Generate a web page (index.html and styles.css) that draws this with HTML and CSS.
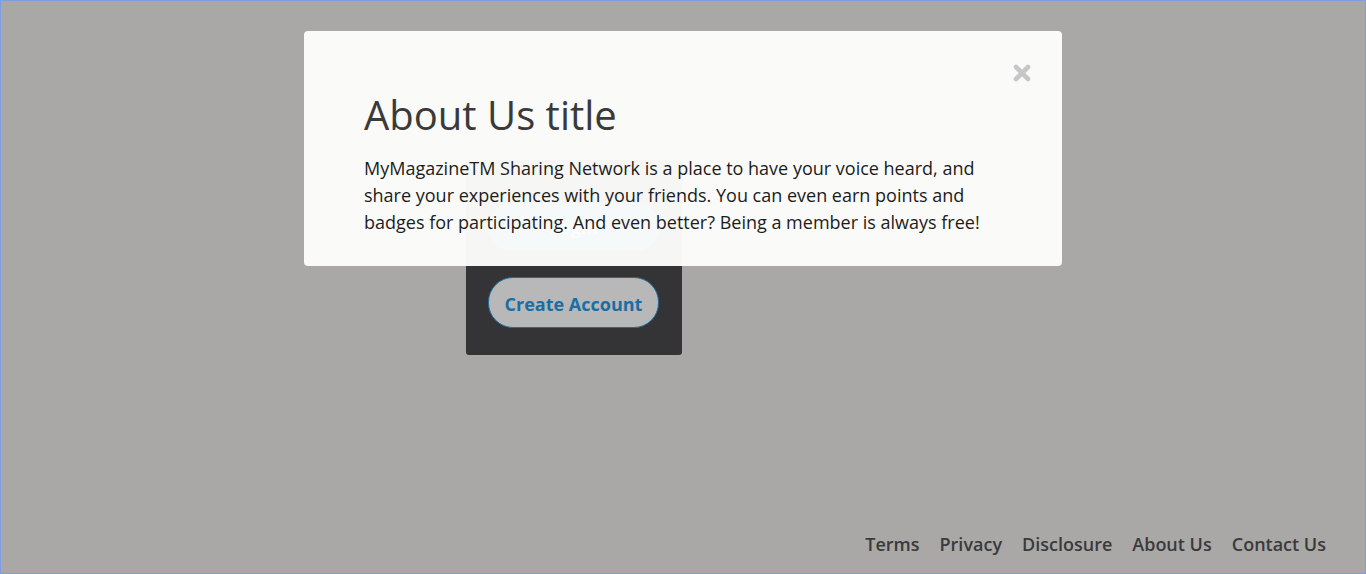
FILE: index.html
```html
<!DOCTYPE html>
<html lang="en">
<head>
<meta charset="utf-8">
<title>About Us</title>
<link rel="stylesheet" href="styles.css">
</head>
<body>
<div class="page">
  <main class="main">
    <section class="card">
      <button class="btn btn-login">Login</button>
      <button class="btn btn-create">Create Account</button>
    </section>
  </main>
  <footer class="footer">
    <a href="#">Terms</a>
    <a href="#">Privacy</a>
    <a href="#">Disclosure</a>
    <a href="#">About Us</a>
    <a href="#">Contact Us</a>
  </footer>
</div>
<div class="modal">
  <button class="close" aria-label="Close">
    <svg width="18" height="18" viewBox="0 0 18 18"><path d="M3 3 L15 15 M15 3 L3 15" stroke="#c7c7c7" stroke-width="4.6" stroke-linecap="round"/></svg>
  </button>
  <h1 class="modal-title">About Us title</h1>
  <p class="modal-text">MyMagazineTM Sharing Network is a place to have your voice heard, and share your experiences with your friends. You can even earn points and badges for participating. And even better? Being a member is always free!</p>
</div>
</body>
</html>
```
FILE: styles.css
```css
* { box-sizing: border-box; }
html, body { margin: 0; padding: 0; }
body {
  font-family: "Open Sans", "DejaVu Sans", sans-serif;
  background: #a9a8a7;
}
.page {
  height: 574px;
  border: 1px solid #7d9ee0;
  background: #a9a8a7;
  display: flex;
  flex-direction: column;
}
.main {
  flex: 1;
  padding: 159px 0 0 465px;
}
.card {
  width: 216px;
  height: 195px;
  background: #343436;
  border-radius: 3px;
  padding: 43px 0 0 22px;
  display: flex;
  flex-direction: column;
  gap: 26px;
}
.btn {
  font-family: "Open Sans", sans-serif;
  font-weight: 700;
  font-size: 18px;
  width: 171px;
  height: 50px;
  border-radius: 25px;
  padding: 0;
  cursor: pointer;
}
.btn-login {
  height: 48px;
  background: #2a8acb;
  color: #fff;
  border: 1px solid #2a8acb;
}
.btn-create {
  height: 51px;
  padding-top: 3px;
  background: #b8b8b8;
  color: #1b6ea4;
  border: 1.5px solid #1b6ea4;
}
.footer {
  display: flex;
  justify-content: flex-end;
  gap: 20px;
  padding: 0 39px 17px 0;
}
.footer a {
  color: #3a3a3b;
  text-decoration: none;
  font-weight: 600;
  font-size: 18px;
  line-height: 24px;
}
.modal {
  position: absolute;
  left: 304px;
  top: 31px;
  width: 758px;
  height: 235px;
  background: rgba(252, 252, 251, 0.972);
  border-radius: 4px;
  padding: 0 60px;
}
.close {
  position: absolute;
  right: 31px;
  top: 33px;
  width: 18px;
  height: 18px;
  padding: 0;
  border: 0;
  background: none;
  cursor: pointer;
}
.close svg { display: block; }
.modal-title {
  margin: 0;
  padding-top: 57px;
  font-weight: 400;
  font-size: 40px;
  line-height: 54px;
  color: #3a3a3a;
}
.modal-text {
  margin: 13px 0 0;
  font-size: 18px;
  line-height: 27px;
  color: #1c1c1c;
}
```
